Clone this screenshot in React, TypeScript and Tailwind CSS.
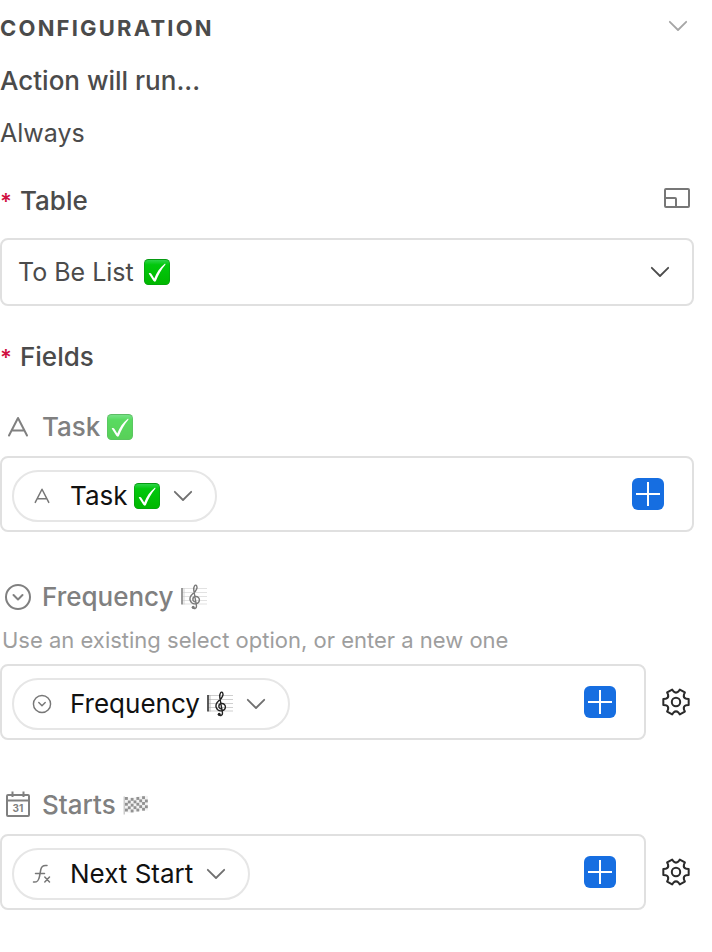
import { useId, type ReactNode } from "react";

type IconProps = { className?: string };

function ChevronIcon({ className = "" }: IconProps) {
  return (
    <svg viewBox="0 0 20 12" className={`h-3 w-5 shrink-0 ${className}`} fill="none" stroke="currentColor" strokeWidth="1.8" strokeLinecap="round" strokeLinejoin="round" aria-hidden="true">
      <path d="M1.800 1.800 10 10l8.200-8.200" />
    </svg>
  );
}

function ExpandIcon() {
  return (
    <svg viewBox="0 0 28 22" className="h-[22px] w-7" fill="none" stroke="currentColor" strokeWidth="2" aria-hidden="true">
      <rect x="2" y="2" width="24" height="18" rx="1" />
      <path d="M2 11h10a1 1 0 0 1 1 1v8" />
    </svg>
  );
}

function TextFieldIcon({ className = "" }: IconProps) {
  return (
    <svg viewBox="0 0 24 24" className={className} fill="none" stroke="currentColor" strokeWidth="2" strokeLinecap="round" strokeLinejoin="round" aria-hidden="true">
      <path d="M3 20.500 12 3l9 17.500M5.500 15.500h13" />
    </svg>
  );
}

function SelectFieldIcon({ className = "" }: IconProps) {
  return (
    <svg viewBox="0 0 28 28" className={className} fill="none" stroke="currentColor" strokeWidth="2" strokeLinecap="round" strokeLinejoin="round" aria-hidden="true">
      <circle cx="14" cy="14" r="12" />
      <path d="m9.500 12 4.500 4.500 4.500-4.500" />
    </svg>
  );
}

function CalendarIcon() {
  return (
    <svg viewBox="0 0 28 28" className="size-7" fill="none" stroke="currentColor" strokeWidth="2" aria-hidden="true">
      <rect x="3" y="4" width="22" height="21" rx="1" />
      <path d="M3 9.500h22M8.500 .5V6M19.500 .5V6" />
      <text x="14" y="21" textAnchor="middle" fontSize="10" fontWeight="700" fill="currentColor" stroke="none">
        31
      </text>
    </svg>
  );
}

function FormulaIcon() {
  return (
    <svg viewBox="0 0 20 20" className="size-5" fill="none" stroke="currentColor" strokeWidth="1.500" strokeLinecap="round" aria-hidden="true">
      <path d="M1.500 18c4 .5 5.200-1.500 6-5.500l1.300-7C9.400 2.200 11 .9 15 1.500M3.500 9.500h9" />
      <path d="m12.800 13 4.700 5M17.500 13l-4.700 5" />
    </svg>
  );
}

const polar = (radius: number, degrees: number) => {
  const angle = (degrees * Math.PI) / 180;
  return `${(14 + radius * Math.cos(angle)).toFixed(2)} ${(14 + radius * Math.sin(angle)).toFixed(2)}`;
};

// Six teeth, with a rounded valley after each one.
const gearPath = [0, 60, 120, 180, 240, 300]
  .map((a) => `${a === 0 ? "M" : "L"}${polar(13, a - 13)}L${polar(13, a + 13)}L${polar(10.8, a + 17)}Q${polar(8.2, a + 30)} ${polar(10.8, a + 43)}`)
  .join("");

function GearIcon() {
  return (
    <svg viewBox="0 0 28 28" className="size-7" fill="none" stroke="currentColor" strokeWidth="2" strokeLinejoin="round" aria-hidden="true">
      <circle cx="14" cy="14" r="4.200" />
      <path d={`${gearPath}Z`} />
    </svg>
  );
}

function CheckEmoji({ faded = false }: { faded?: boolean }) {
  const id = useId();
  return (
    <svg viewBox="0 0 26 26" className={`size-[26px] shrink-0 ${faded ? "opacity-65" : ""}`} role="img" aria-label="check mark">
      <defs>
        <linearGradient id={id} x1="0" y1="0" x2="0" y2="1">
          <stop offset="0" stopColor="#2fd44a" />
          <stop offset="0.2" stopColor="#02c80d" />
          <stop offset="1" stopColor="#00b700" />
        </linearGradient>
      </defs>
      <rect width="26" height="26" rx="4.500" fill="#079a12" />
      <rect x="0.600" y="0.900" width="24.800" height="24.500" rx="4" fill={`url(#${id})`} />
      <path d="M4.700 14.500c1-.8 2.200-.6 2.800.5l2.800 4.500C12.500 13.500 16 8.500 20.500 5c.8-.4 1.300.1.800.8-4.200 5-7 10.200-9.300 16-.7 1.200-2 1-2.700 0z" fill="#fff" />
    </svg>
  );
}

function MusicEmoji({ faded = false }: { faded?: boolean }) {
  return (
    <svg viewBox="0 0 26 26" className={`size-[26px] shrink-0 ${faded ? "opacity-60" : ""}`} fill="none" role="img" aria-label="musical score">
      <path d="M1.500 4.500H26M1.500 8.500H26M1.500 12.500H26M1.500 16.500H26M1.500 20H26" stroke="#cfcfcf" />
      <path d="M1 4v16.500" stroke="#222" strokeWidth="1.500" />
      <path d="M3 4v16.500" stroke="#aaa" strokeWidth="0.800" />
      <path d="M11.500 23.500c1 1.800 4.300 1.300 4-1.500L12.800 6.500C12.200 2 14.500.3 15.500 1.500c2.200 3.500-1.500 6.300-4 8.500-5 4.500-1.800 10.500 3 9.800 5.500-.8 4.800-7.500.2-7.300-3.700.2-3.500 4.500-1 5.300" stroke="#222" strokeWidth="1.400" strokeLinecap="round" />
      <circle cx="12.200" cy="23.200" r="1.500" fill="#222" />
    </svg>
  );
}

const flagCells = Array.from({ length: 40 }, (_, i) => ({
  col: i % 8,
  row: Math.floor(i / 8),
})).filter(({ col, row }) => (col + row) % 2 === 0);

const flagWave = [0, 0.6, 0.9, 0.5, 0, -0.5, -0.8, -0.4];

function FlagEmoji() {
  return (
    <svg viewBox="0 0 26 20" className="h-5 w-[26px] shrink-0 opacity-60" role="img" aria-label="chequered flag">
      <path d="M1.200 1.500v18" stroke="#999" strokeWidth="1.200" />
      <path d="M2 2q5.800 2 11.500 0t11.500-1v14.500q-5.800-1-11.500 1T2 17z" fill="#ececec" />
      {flagCells.map(({ col, row }) => (
        <rect key={`${col}-${row}`} x={2 + col * 2.850} y={2 + row * 2.900 + flagWave[col]} width="2.850" height="2.900" fill="#4a4a4a" />
      ))}
    </svg>
  );
}

function Required({ children }: { children: ReactNode }) {
  return (
    <>
      <span className="w-5 text-[22px] font-semibold text-[#d0103f]">*</span>
      {children}
    </>
  );
}

function FieldLabel({ icon, children }: { icon: ReactNode; children: ReactNode }) {
  return (
    <h3 className="flex h-8 items-center font-medium text-[#808080]">
      <span className="mr-[10px] ml-1 flex w-7 justify-center">{icon}</span>
      <span className="flex items-center gap-[7px]">{children}</span>
    </h3>
  );
}

type TokenFieldProps = {
  label: string;
  icon: ReactNode;
  children: ReactNode;
  settings?: boolean;
};

/** Input box holding one value token, an insert button and optional settings. */
function TokenField({ label, icon, children, settings = false }: TokenFieldProps) {
  return (
    <div role="group" aria-label={label} className="flex items-center">
      <div className="flex h-[76px] flex-1 items-center justify-between rounded-lg border-2 border-[#e0e0e0] pr-7 pl-[10px]">
        <button type="button" aria-haspopup="menu" className="mt-1 flex h-[52px] items-center rounded-full border-2 border-[#e6e6e6] pr-[22px] pl-[18px] text-[#111]">
          <span className="mr-[18px] flex w-5 justify-center text-[#777]">{icon}</span>
          <span className="flex items-center gap-[7px]">{children}</span>
          <ChevronIcon className="ml-[13px] text-[#707070]" />
        </button>
        <button type="button" aria-label={`Insert value into ${label}`} className="flex size-8 items-center justify-center rounded-md bg-[#166ee1] text-white">
          <svg viewBox="0 0 24 24" className="size-6" stroke="currentColor" strokeWidth="2" aria-hidden="true">
            <path d="M12 0v24M0 12h24" />
          </svg>
        </button>
      </div>
      {settings ? (
        <button type="button" aria-label={`${label} settings`} className="mr-1 ml-4 text-[#2b2b2b]">
          <GearIcon />
        </button>
      ) : null}
    </div>
  );
}

export default function App() {
  return (
    <main className="min-h-screen bg-white pr-[18px] pb-10 font-['Inter','Liberation_Sans',sans-serif] text-[26px] leading-8 text-[#4b4b4b]">
      <header className="flex h-14 items-center justify-between pr-[6px]">
        <h2 className="text-[22px] font-bold tracking-widest">CONFIGURATION</h2>
        <button type="button" aria-label="Collapse configuration" className="pb-1 text-[#a6a6a6]">
          <ChevronIcon />
        </button>
      </header>

      <section className="mt-[9px] flex flex-col gap-5">
        <h3 className="font-medium">Action will run...</h3>
        <p className="text-[25px]">Always</p>
      </section>

      <section className="mt-9">
        <div className="flex items-start justify-between pr-[3px]">
          <label htmlFor="table" className="flex font-medium">
            <Required>Table</Required>
          </label>
          <button type="button" aria-label="Open table" className="mt-[2px] text-[#777]">
            <ExpandIcon />
          </button>
        </div>
        <div className="relative mt-[21px]">
          <select id="table" className="block h-[68px] w-full appearance-none rounded-lg border-2 border-[#e0e0e0] bg-white pr-14 pl-4 text-[25px]">
            <option>To Be List</option>
          </select>
          <span className="pointer-events-none absolute inset-y-0 left-36 flex items-center">
            <CheckEmoji />
          </span>
          <span className="pointer-events-none absolute inset-y-0 right-6 flex items-center">
            <ChevronIcon />
          </span>
        </div>
      </section>

      <section className="mt-[35px]">
        <h2 className="flex font-medium">
          <Required>Fields</Required>
        </h2>

        <div className="mt-[38px] flex flex-col gap-[13px]">
          <FieldLabel icon={<TextFieldIcon className="size-6" />}>
            Task <CheckEmoji faded />
          </FieldLabel>
          <TokenField label="Task" icon={<TextFieldIcon className="size-[18px]" />}>
            Task <CheckEmoji />
          </TokenField>
        </div>

        <div className="mt-[49px] flex flex-col">
          <FieldLabel icon={<SelectFieldIcon className="size-7" />}>
            Frequency <MusicEmoji faded />
          </FieldLabel>
          <p className="mt-[11px] mb-2 pl-[2px] text-[22px] text-[#9e9e9e]">Use an existing select option, or enter a new one</p>
          <TokenField label="Frequency" icon={<SelectFieldIcon className="size-5" />} settings>
            Frequency <MusicEmoji />
          </TokenField>
        </div>

        <div className="mt-[49px] flex flex-col gap-[13px]">
          <FieldLabel icon={<CalendarIcon />}>
            Starts <FlagEmoji />
          </FieldLabel>
          <TokenField label="Starts" icon={<FormulaIcon />} settings>
            Next Start
          </TokenField>
        </div>
      </section>
    </main>
  );
}
